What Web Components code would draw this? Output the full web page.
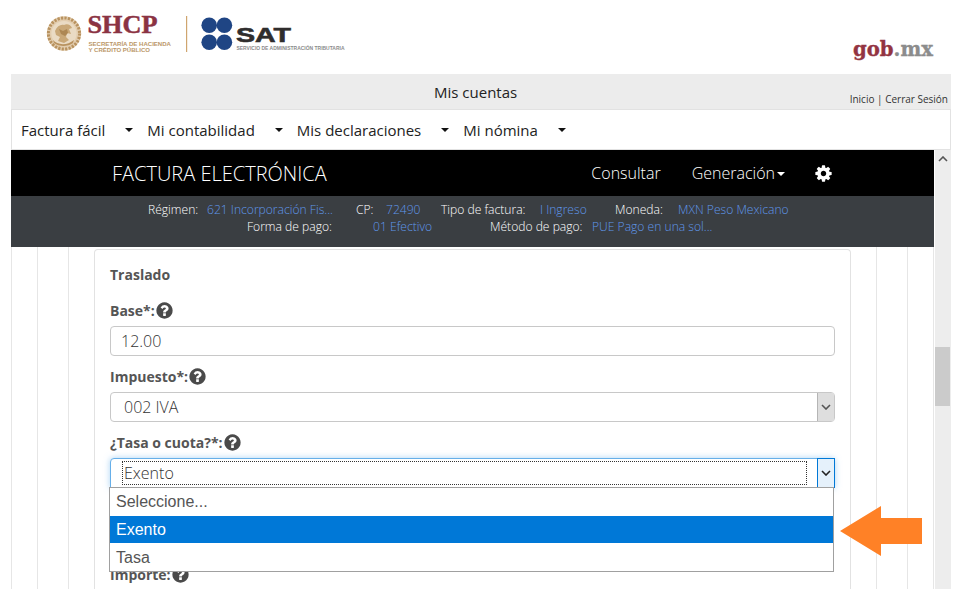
<!DOCTYPE html>
<html lang="es">
<head>
<meta charset="utf-8">
<title>Factura electrónica</title>
<style>
  html, body { margin: 0; height: 589px; overflow: hidden; background: #fff; }
  body { font-family: "Open Sans", "Liberation Sans", sans-serif; color: #555; position: relative; }
</style>
</head>
<body>
<gov-header></gov-header>
<account-bar></account-bar>
<main-menu></main-menu>
<scroll-frame>
  <fe-navbar></fe-navbar>
  <fe-summary></fe-summary>
  <fe-columns>
    <tax-card>
      <form-field label="Base*:" type="text" value="12.00"></form-field>
      <form-field label="Impuesto*:" type="select" value="002 IVA"></form-field>
      <form-field label="¿Tasa o cuota?*:" type="open" value="Exento"></form-field>
      <form-field label="Importe:" type="none"></form-field>
    </tax-card>
  </fe-columns>
</scroll-frame>
<callout-arrow></callout-arrow>

<script>
// icons shared by several components (viewBox 0 0 1792 1792)
var ICON_HELP = '<svg viewBox="0 0 1792 1792" width="19" height="19" fill="currentColor"><path d="M1024 1376v-192q0-14-9-23t-23-9h-192q-14 0-23 9t-9 23v192q0 14 9 23t23 9h192q14 0 23-9t9-23zm256-672q0-88-55.5-163t-138.5-116-170-41q-243 0-371 213-15 24 8 42l132 100q7 6 19 6 16 0 25-12 53-68 86-92 34-24 86-24 48 0 85.5 26t37.5 59q0 38-20 61t-68 45q-63 28-115.5 86.5t-52.5 125.5v36q0 14 9 23t23 9h192q14 0 23-9t9-23q0-19 21.5-49.5t54.5-49.5q32-18 49-28.5t46-35 44.5-48 28-60.5 12.5-81zm384 192q0 209-103 385.5t-279.5 279.5-385.5 103-385.5-103-279.5-279.5-103-385.5 103-385.5 279.5-279.5 385.5-103 385.5 103 279.5 279.5 103 385.5z"/></svg>';
var ICON_COG = '<svg viewBox="0 0 1792 1792" width="19" height="19" fill="currentColor"><path d="M1152 896q0-106-75-181t-181-75-181 75-75 181 75 181 181 75 181-75 75-181zm512-109v222q0 12-8 23t-20 13l-185 28q-19 54-39 91 35 50 107 138 10 12 10 25t-9 23q-27 37-99 108t-94 71q-12 0-26-9l-138-108q-44 23-91 38-16 136-29 186-7 28-36 28h-222q-14 0-24.5-8.5t-11.5-21.5l-28-184q-49-16-90-37l-141 107q-10 9-25 9-14 0-25-11-126-114-165-168-7-10-7-23 0-12 8-23 15-21 51-66.5t54-70.5q-27-50-41-99l-183-27q-13-2-21-12.5t-8-23.5v-222q0-12 8-23t19-13l186-28q14-46 39-92-40-57-107-138-10-12-10-24 0-10 9-23 26-36 98.5-107.5t94.5-71.5q13 0 26 10l138 107q44-23 91-38 16-136 29-186 7-28 36-28h222q14 0 24.5 8.5t11.5 21.5l28 184q49 16 90 37l142-107q9-9 24-9 13 0 25 10 129 119 165 170 7 8 7 22 0 12-8 23-15 21-51 66.5t-54 70.5q26 50 41 98l183 28q13 2 21 12.5t8 23.5z"/></svg>';
var CHEVRON = '<svg viewBox="0 0 10 6" width="10" height="6" fill="none" stroke="currentColor" stroke-width="1.6"><path d="M1 1l4 4 4-4"/></svg>';

// small helper so every class below stays short
function component(tag, html, onBuild) {
  customElements.define(tag, class extends HTMLElement {
    constructor() {
      super();
      this.attachShadow({ mode: "open" });
      this.shadowRoot.innerHTML = html;
    }
    connectedCallback() {
      if (onBuild) onBuild(this);
    }
  });
}

/* top strip with the logos */
component("gov-header", `
<style>
  :host { display: flex; justify-content: space-between; height: 74px; }
  svg { display: block; }
  .serif { font-family: "Liberation Serif", serif; font-weight: 700; }
  .small { font-family: "Liberation Sans", sans-serif; font-weight: 700; }
</style>
<svg width="360" height="74" viewBox="0 0 360 74">
  <defs><filter id="soft"><feGaussianBlur stdDeviation="0.5"/></filter></defs>
  <g filter="url(#soft)">
    <circle cx="64" cy="33.5" r="17.2" fill="#e2cdaf"/>
    <circle cx="64" cy="33.5" r="15.6" fill="none" stroke="#b8925f" stroke-width="3" stroke-dasharray="2.2 1.3"/>
    <circle cx="64" cy="33.5" r="12.6" fill="#eadbc4"/>
    <path d="M55 31c2-5 6-7 9-6 3-2 7 0 8 3l-3 1 2 5-4-1-1 4 3 3-5 3-6-2 2-4-4-2z" fill="#c9a878"/>
    <path d="M53 40c4 5 14 6 21 0l-1 3c-5 4-14 4-19 0z" fill="#b8925f"/>
    <path d="M59 29l4 2 4-2 1 4-3 3-4-2z" fill="#ad8752"/>
  </g>
  <text class="serif" x="87.5" y="33" font-size="24.5" fill="#8b3343" stroke="#8b3343" stroke-width=".45" textLength="70" lengthAdjust="spacingAndGlyphs">SHCP</text>
  <text class="small" x="88.5" y="46" font-size="5.6" fill="#bb9768" textLength="82.5" lengthAdjust="spacingAndGlyphs">SECRETARÍA DE HACIENDA</text>
  <text class="small" x="88.5" y="52" font-size="5.6" fill="#bb9768" textLength="61.5" lengthAdjust="spacingAndGlyphs">Y CRÉDITO PÚBLICO</text>
  <rect x="186" y="16" width="1.2" height="36" fill="#cfa56f"/>
  <circle cx="209.2" cy="25.3" r="7.8" fill="#1f4584"/>
  <circle cx="224.4" cy="25.3" r="7.8" fill="#1f4584"/>
  <circle cx="209.2" cy="42.3" r="7.8" fill="#1f4584"/>
  <circle cx="224.4" cy="42.3" r="7.8" fill="#1f4584"/>
  <text class="small" x="236" y="42" font-size="20.5" fill="#2f2d2d" stroke="#2f2d2d" stroke-width=".6" textLength="55" lengthAdjust="spacingAndGlyphs">SAT</text>
  <text class="small" x="236.5" y="50" font-size="4.6" fill="#8b8b8b" textLength="108" lengthAdjust="spacingAndGlyphs">SERVICIO DE ADMINISTRACIÓN TRIBUTARIA</text>
</svg>
<svg width="110" height="74" viewBox="0 0 110 74">
  <text x="1" y="56" font-family="DejaVu Serif" font-weight="700" font-size="21" stroke-width=".35" textLength="80" lengthAdjust="spacingAndGlyphs"><tspan fill="#933442" stroke="#933442">gob</tspan><tspan fill="#8c8c8c" stroke="#8c8c8c">.mx</tspan></text>
</svg>
`);

/* grey bar: Mis cuentas */
component("account-bar", `
<style>
  :host { display: flex; height: 35px; margin: 0 11px; background: #ececec; color: #222; font-size: 15px; box-sizing: border-box; padding: 0 3px 0 423px; }
  .title { line-height: 37px; }
  .links { margin-left: auto; align-self: flex-end; font-size: 10px; line-height: 19px; color: #333; }
</style>
<div class="title">Mis cuentas</div>
<div class="links">Inicio | Cerrar Sesión</div>
`);

/* white menu row */
component("main-menu", `
<style>
  :host { display: flex; height: 41px; margin: 0 11px; box-sizing: border-box; border: 1px solid #e2e2e2; padding-left: 9px; align-items: center; background: #fff; color: #222; font-size: 15px; }
  .item { display: flex; align-items: center; margin-right: 14px; }
  i { display: block; margin-left: 20px; margin-top: 1px; border: 4px solid transparent; border-top-color: #111; border-bottom: 0; }
</style>
<div class="item">Factura fácil<i></i></div>
<div class="item">Mi contabilidad<i></i></div>
<div class="item">Mis declaraciones<i></i></div>
<div class="item">Mi nómina<i></i></div>
`);

/* inner frame, its scrollbar sits on the right */
component("scroll-frame", `
<style>
  :host { display: grid; grid-template-columns: 1fr 17px; height: 439px; margin: 0 11px; overflow: hidden; background: #fff; }
  .page { min-width: 0; height: 439px; overflow: hidden; }
  .bar { position: relative; background: #ededed; color: #555; display: flex; justify-content: center; padding-top: 6px; box-sizing: border-box; border-left: 1px solid #fff; }
  .bar svg { transform: rotate(180deg); }
  .thumb { position: absolute; left: 0; right: 1px; top: 197px; height: 59px; background: #cbcbcb; }
</style>
<div class="page"><slot></slot></div>
<div class="bar">${CHEVRON}<div class="thumb"></div></div>
`);

/* black navbar */
component("fe-navbar", `
<style>
  :host { display: flex; align-items: center; height: 46px; background: #000; color: #fff; font-weight: 300; padding-left: 101px; box-sizing: border-box; font-size: 16px; }
  .brand { font-size: 20px; margin-right: auto; }
  .link { margin-right: 31px; display: flex; align-items: center; }
  .caret { margin-left: 2px; margin-top: 2px; border: 4px solid transparent; border-top-color: #fff; border-bottom: 0; }
  .cog { margin-right: 101px; margin-left: -2px; height: 19px; }
</style>
<div class="brand">FACTURA ELECTRÓNICA</div>
<div class="link">Consultar</div>
<div class="link">Generación<span class="caret"></span></div>
<div class="cog">${ICON_COG}</div>
`);

/* dark row with the invoice summary */
component("fe-summary", `
<style>
  :host { display: block; height: 51px; background: #3a3e42; box-sizing: border-box; padding-top: 5px; font-size: 12.1px; font-weight: 300; line-height: 17px; color: #fff; white-space: nowrap; }
  .row { display: flex; }
  b { font-weight: 300; color: #5f97ea; }
  .a { padding-left: 137px; }
  .b { padding-left: 236px; }
</style>
<div class="row a">
  <span style="width:59px">Régimen:</span><b style="width:149px">621 Incorporación Fis...</b>
  <span style="width:30px">CP:</span><b style="width:55px">72490</b>
  <span style="width:99px">Tipo de factura:</span><b style="width:75px">I Ingreso</b>
  <span style="width:63px">Moneda:</span><b>MXN Peso Mexicano</b>
</div>
<div class="row b">
  <span style="width:126px">Forma de pago:</span><b style="width:117px">01 Efectivo</b>
  <span style="width:102px">Método de pago:</span><b>PUE Pago en una sol...</b>
</div>
`);

/* nested bootstrap-like columns, each one draws its side rules */
component("fe-columns", `
<style>
  :host { display: block; height: 342px; overflow: hidden; }
  .col { border: solid #e6e6e6; border-width: 0 1px; height: 100%; box-sizing: border-box; }
  .c1 { padding: 0 25px; }
  .c2 { padding: 0 30px; }
  .c3 { padding: 2px 25px 0; }
</style>
<div class="col c1"><div class="col c2"><div class="col c3"><slot></slot></div></div></div>
`);

/* card holding the form */
component("tax-card", `
<style>
  :host { display: block; position: relative; border: 1px solid #e2e2e2; border-bottom: 0; border-radius: 4px 4px 0 0; padding: 16px 15px 0; height: 400px; box-sizing: border-box; background: #fff; }
  h4 { margin: 0 0 17px; font-size: 14px; line-height: 17px; font-weight: 700; color: #555; }
</style>
<h4>Traslado</h4>
<slot></slot>
`);

/* one label + control */
component("form-field", `
<style>
  :host { display: block; position: relative; height: 66px; color: #555; }
  :host([type=open]) { height: 132px; }
  label { display: flex; align-items: center; height: 20px; font-size: 14px; font-weight: 700; color: #555; }
  label span { display: block; height: 19px; color: #4a4a4a; }
  .ctl { display: none; position: relative; height: 30px; margin-top: 6px; box-sizing: border-box; border: 1px solid #c8c8c8; border-radius: 4px; font-size: 16px; font-weight: 300; line-height: 28px; padding-left: 10px; color: #333; background: #fff; }
  :host([type=select]) .ctl { padding-left: 13px; }
  .btn { display: none; position: absolute; top: 0; right: 0; bottom: 0; width: 16px; background: #dedede; border-left: 1px solid #b5b5b5; align-items: center; justify-content: center; color: #555; }
  :host([type=select]) .btn, :host([type=open]) .btn { display: flex; }
  :host([type=text]) .ctl, :host([type=select]) .ctl, :host([type=open]) .ctl { display: block; }
  :host([type=open]) .ctl { border-color: #66afe9; box-shadow: 0 0 6px rgba(102,175,233,.55); border-radius: 4px 4px 0 0; padding-left: 11px; }
  :host([type=open]) .btn { background: #e5f1fb; border: 1px solid #0078d7; top: -1px; bottom: -1px; right: -1px; color: #222; }
  .focus { display: none; position: absolute; left: 11px; right: 27px; top: 2px; bottom: 2px; border: 1px dotted #333; }
  :host([type=open]) .focus { display: block; }
  :host([type=open]) .val { position: relative; left: 2px; }
  .list { display: none; position: absolute; z-index: 2; left: -2px; right: 0; top: 28px; height: 85px; box-sizing: border-box; border: 1px solid #a0a0a0; background: #fff; font: 400 16px/27px "Liberation Sans", Arial, sans-serif; color: #555; }
  :host([type=open]) .list { display: grid; grid-template-rows: 28px 27px 28px; }
  .list div { padding-left: 6px; line-height: 27px; }
  .list div:last-child { line-height: 29px; }
  .list .on { background: #0078d7; color: #fff; }
</style>
<label><em style="font-style:normal"></em><span>${ICON_HELP}</span></label>
<div class="ctl">
  <div class="val"></div><div class="focus"></div>
  <div class="btn">${CHEVRON}</div>
  <div class="list"><div>Seleccione...</div><div class="on">Exento</div><div>Tasa</div></div>
</div>
`, function (el) {
  el.shadowRoot.querySelector("em").textContent = el.getAttribute("label");
  el.shadowRoot.querySelector(".val").textContent = el.getAttribute("value") || "";
});

/* orange annotation arrow painted over the page */
component("callout-arrow", `
<style>
  :host { display: block; position: absolute; left: 840px; top: 506px; width: 82px; height: 50px; }
  svg { display: block; }
</style>
<svg width="82" height="50" viewBox="0 0 82 50"><path d="M0 25L41 0v12h41v26H41v12z" fill="#ff8126"/></svg>
`);
</script>
</body>
</html>
